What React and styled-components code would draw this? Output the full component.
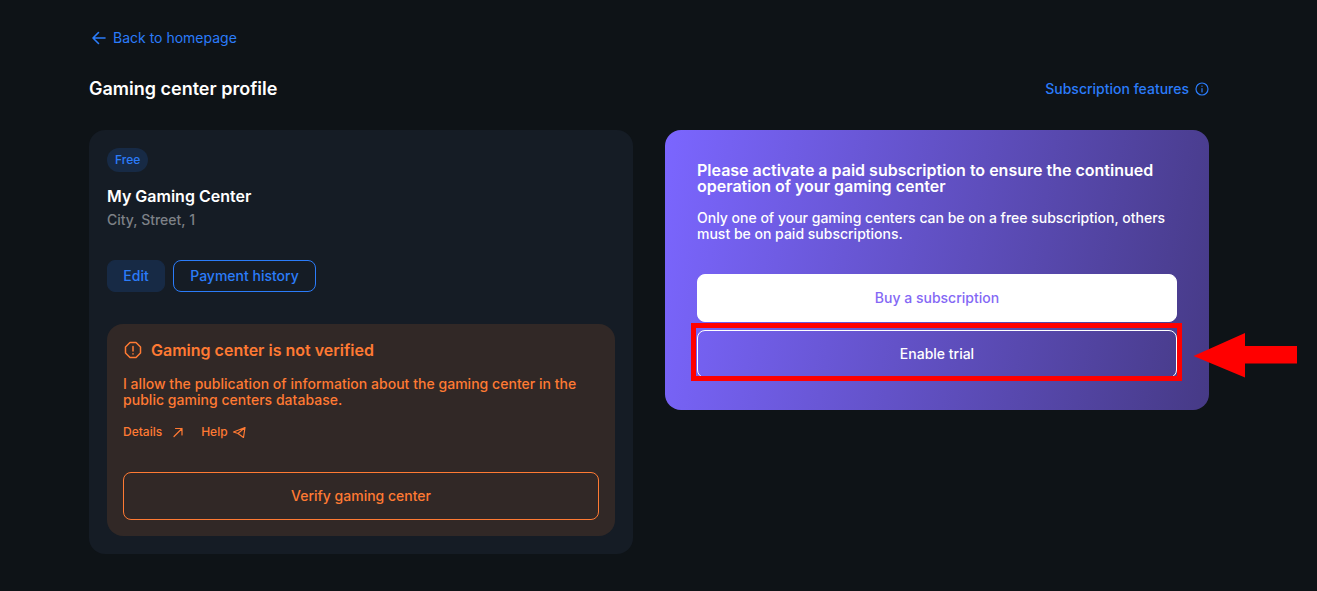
import React from "react";
import styled, { createGlobalStyle } from "styled-components";

const blue = "#2b7cfa";
const orange = "#ff7a33";

const GlobalStyle = createGlobalStyle`
  html, body {
    margin: 0;
    background: #0e1317;
    font-family: Inter, "Noto Sans", sans-serif;
  }
  * {
    box-sizing: border-box;
  }
`;

const Page = styled.div`
  position: relative;
  width: 1317px;
  height: 591px;
  overflow: hidden;
  padding: 29px 108px 0 89px;
`;

const BackLink = styled.a`
  display: flex;
  align-items: center;
  gap: 6px;
  height: 18px;
  padding-left: 2px;
  color: ${blue};
  font-size: 14px;
  line-height: 18px;
`;

const Header = styled.div`
  display: flex;
  align-items: center;
  justify-content: space-between;
  margin-top: 30px;
  height: 24px;
`;

const PageTitle = styled.h1`
  margin: 0;
  color: #fff;
  font-size: 18px;
  font-weight: 600;
  line-height: 24px;
`;

const FeaturesLink = styled.a`
  display: flex;
  align-items: center;
  gap: 6px;
  margin-top: -1px;
  color: ${blue};
  font-size: 14px;
  font-weight: 500;
`;

const Columns = styled.div`
  display: grid;
  grid-template-columns: 544px 544px;
  gap: 32px;
  align-items: start;
  margin-top: 29px;
`;

const ProfileCard = styled.section`
  padding: 18px;
  border-radius: 16px;
  background: #151c25;
`;

const Badge = styled.span`
  display: inline-block;
  height: 24px;
  padding: 0 8px;
  border-radius: 12px;
  background: #172a45;
  color: ${blue};
  font-size: 12px;
  font-weight: 500;
  line-height: 24px;
  vertical-align: top;
`;

const CenterName = styled.h2`
  margin: 14px 0 0;
  color: #fff;
  font-size: 16px;
  font-weight: 600;
  line-height: 20px;
`;

const Address = styled.div`
  margin-top: 4px;
  color: #7d8187;
  font-size: 14px;
  font-weight: 500;
  line-height: 20px;
`;

const ButtonRow = styled.div`
  display: flex;
  gap: 8px;
  margin-top: 30px;
`;

const SmallButton = styled.button`
  width: ${({ $wide }) => ($wide ? "143px" : "58px")};
  height: 32px;
  padding: 0 0 2px;
  border: 1px solid ${({ $outlined }) => ($outlined ? blue : "#172a45")};
  border-radius: 8px;
  background: ${({ $outlined }) => ($outlined ? "transparent" : "#172a45")};
  color: ${blue};
  font: 500 14px Inter, sans-serif;
`;

const Alert = styled.div`
  margin-top: 32px;
  padding: 16px;
  border-radius: 16px;
  background: #312826;
  color: ${orange};
`;

const AlertTitle = styled.div`
  display: flex;
  align-items: center;
  gap: 9px;
  height: 20px;
  font-size: 16px;
  font-weight: 600;
`;

const AlertText = styled.p`
  margin: 16px 0 0;
  font-size: 14px;
  font-weight: 500;
  line-height: 16px;
  letter-spacing: 0.03px;
`;

const AlertLinks = styled.div`
  display: flex;
  gap: 17px;
  margin-top: 16px;
  height: 16px;
`;

const AlertLink = styled.a`
  display: flex;
  align-items: center;
  gap: ${({ $gap }) => $gap}px;
  font-size: 12px;
  font-weight: 500;
  line-height: 16px;
`;

const VerifyButton = styled.button`
  display: block;
  width: 100%;
  height: 48px;
  margin-top: 32px;
  padding: 0 0 2px;
  border: 1px solid ${orange};
  border-radius: 8px;
  background: transparent;
  color: ${orange};
  font: 500 14px Inter, sans-serif;
`;

const PromoCard = styled.section`
  padding: 32px;
  border-radius: 16px;
  background: linear-gradient(100deg, #7b66ff 0%, #463a86 100%);
  color: #fff;
`;

const PromoTitle = styled.h2`
  margin: 0;
  font-size: 16px;
  font-weight: 600;
  line-height: 16px;
`;

const PromoText = styled.p`
  margin: 16px 0 0;
  font-size: 14px;
  font-weight: 500;
  line-height: 16px;
`;

const PromoButtons = styled.div`
  display: flex;
  flex-direction: column;
  gap: 8px;
  margin-top: 32px;
`;

const PromoButton = styled.button`
  height: 48px;
  padding: 0 0 2px;
  border: 1px solid #fff;
  border-radius: 8px;
  background: ${({ $solid }) => ($solid ? "#fff" : "transparent")};
  color: ${({ $solid }) => ($solid ? "#8468f5" : "#fff")};
  font: 500 14px Inter, sans-serif;
`;

// the red marks laid over the screenshot
const Highlight = styled.div`
  position: absolute;
  left: 691px;
  top: 323px;
  width: 491px;
  height: 58px;
  border: 5px solid #f00;
`;

const ArrowMark = styled.svg`
  position: absolute;
  left: 1193px;
  top: 333px;
`;

const Icon = styled.svg`
  flex: none;
  fill: none;
  stroke: currentColor;
  stroke-linecap: round;
  stroke-linejoin: round;
`;

export default function App() {
  return (
    <Page>
      <GlobalStyle />
      <BackLink>
        <Icon width="16" height="16" viewBox="0 0 16 16" strokeWidth="1.6">
          <path d="M14 8H2.500M7.500 2.500 2 8l5.500 5.500" />
        </Icon>
        Back to homepage
      </BackLink>
      <Header>
        <PageTitle>Gaming center profile</PageTitle>
        <FeaturesLink>
          Subscription features
          <Icon width="14" height="14" viewBox="0 0 14 14" strokeWidth="1.200">
            <circle cx="7" cy="7" r="6" />
            <path d="M7 6.500V10M7 4v.3" />
          </Icon>
        </FeaturesLink>
      </Header>
      <Columns>
        <ProfileCard>
          <Badge>Free</Badge>
          <CenterName>My Gaming Center</CenterName>
          <Address>City, Street, 1</Address>
          <ButtonRow>
            <SmallButton>Edit</SmallButton>
            <SmallButton $outlined $wide>Payment history</SmallButton>
          </ButtonRow>
          <Alert>
            <AlertTitle>
              <Icon width="19" height="19" viewBox="-1 0 19 19" strokeWidth="1.500">
                <path d="M6 1.500h6l4.500 4.500v6L12 16.500H6L1.500 12V6z" />
                <path d="M9 5.500v4.500M9 12.700v.3" />
              </Icon>
              Gaming center is not verified
            </AlertTitle>
            <AlertText>
              I allow the publication of information about the gaming center in the
              public gaming centers database.
            </AlertText>
            <AlertLinks>
              <AlertLink $gap={10}>
                Details
                <Icon width="12" height="12" viewBox="0 0 12 12" strokeWidth="1.200">
                  <path d="M2 10.500 10 2.500M3.500 2.500H10V9" />
                </Icon>
              </AlertLink>
              <AlertLink $gap={4}>
                Help
                <Icon width="14" height="14" viewBox="0 0 14 14" strokeWidth="1.200">
                  <path d="M13 2.500 1.500 7 6 8.500zM13 2.500 11.500 12.500 6 8.500" />
                </Icon>
              </AlertLink>
            </AlertLinks>
            <VerifyButton>Verify gaming center</VerifyButton>
          </Alert>
        </ProfileCard>
        <PromoCard>
          <PromoTitle>
            Please activate a paid subscription to ensure the continued operation of your
            gaming center
          </PromoTitle>
          <PromoText>
            Only one of your gaming centers can be on a free subscription, others must be on
            paid subscriptions.
          </PromoText>
          <PromoButtons>
            <PromoButton $solid>Buy a subscription</PromoButton>
            <PromoButton>Enable trial</PromoButton>
          </PromoButtons>
        </PromoCard>
      </Columns>
      <Highlight />
      <ArrowMark width="104" height="45" viewBox="0 0 104 45">
        <path d="M0.500 23 52 0v13h52v17.500H52V44.500z" fill="#f00" />
      </ArrowMark>
    </Page>
  );
}
